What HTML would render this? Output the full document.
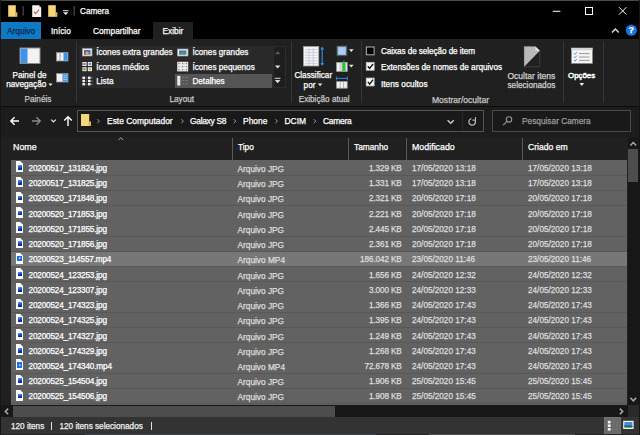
<!DOCTYPE html>
<html lang="pt-BR">
<head>
<meta charset="utf-8">
<title>Camera</title>
<style>
*{margin:0;padding:0;box-sizing:border-box}
html,body{width:640px;height:435px;overflow:hidden;background:#000}
body{position:relative;-webkit-text-stroke:.25px currentColor;font-family:"Liberation Sans",sans-serif;font-size:8.2px;color:#fff;line-height:1}
.a{position:absolute}
.tx{position:absolute;white-space:nowrap;line-height:10px;height:10px}
svg{position:absolute;overflow:visible}
/* title */
#title{left:0;top:0;width:640px;height:22px;background:#000}
#topb{left:0;top:0;width:640px;height:1px;background:#4a4a4a}
#tabs{left:0;top:22px;width:640px;height:17px;background:#000}
#tab-arq{left:1px;top:22px;width:40px;height:17px;background:#0f7ac3}
#tab-exi{left:152.5px;top:22px;width:40.5px;height:17px;background:#202020}
#ribbon{left:0;top:39px;width:640px;height:67.5px;background:#202020}
#ribline{left:0;top:106px;width:640px;height:1.2px;background:#0c0c0c}
.gsep{position:absolute;top:41px;height:62px;width:1px;background:#363636}
#gallery{left:78.5px;top:45.6px;width:194px;height:42.4px;background:#292929}
#gbtn{left:272.5px;top:45.6px;width:13.8px;height:42.4px;border:1px solid #2c2c2c;background:#1e1e1e}
#gsel{left:175px;top:74px;width:97px;height:14px;background:#555}
.glabel{color:#c8c8c8}
/* nav */
#nav{left:0;top:107px;width:640px;height:30px;background:#1c1c1c}
#addr{left:77px;top:110px;width:406.5px;height:22px;border:1px solid #555;background:#191919}
#addrsep{left:461.5px;top:111px;width:1px;height:20px;background:#282828}
#search{left:492px;top:110px;width:139px;height:22px;border:1px solid #4a4a4a;background:#191919}
/* header */
#hdr{left:0;top:137px;width:640px;height:23px;background:#202020}
.hsep{position:absolute;top:138px;height:22px;width:1px;background:#5a5a5a}
/* list */
#list{left:0;top:159.6px;width:640px;height:246px;background:#202020}
.row{position:absolute;left:11px;width:616px;height:14.43px;background:#626262}
.row.hl{background:#777}
#rowsbg{left:11px;top:159.6px;width:616px;height:245.6px;background:#585858}
.c{position:absolute;top:3.6px;white-space:nowrap;line-height:10px;height:10px;color:#dedede}
.c.n{left:17.5px;color:#fff;font-size:8.2px;letter-spacing:-.17px}
.c.t{left:226.5px;font-size:8.3px}
.c.s{right:225.3px;font-size:8.2px;letter-spacing:-.12px}
.c.d1{left:401px;font-size:8.2px}
.c.d2{left:517px;font-size:8.2px}
.fi{position:absolute;left:4.8px;top:1.1px;width:7.6px;height:10.7px;background:linear-gradient(225deg,transparent 1.5px,#d4d4d4 1.5px,#d4d4d4 2.3px,#fff 2.3px);display:block}
.fi b{position:absolute;left:1.8px;top:3.7px;width:4.7px;height:4.6px;background:linear-gradient(170deg,#5aa6ee 0%,#1f5fd0 40%,#0a2a9a 75%,#0a2590 100%);display:block}
.fi.mp4 b{background:#1b6fe2;left:1.2px;top:3px;width:5.4px;height:5.2px}
.fi.mp4 b::after{content:"";position:absolute;left:1.9px;top:1.3px;border-left:2.4px solid #dfeeff;border-top:1.3px solid transparent;border-bottom:1.3px solid transparent}
/* scrollbars */
#vs{left:627.5px;top:137px;width:11.5px;height:268.4px;background:#171717}
#vthumb{left:628px;top:149.3px;width:10.4px;height:32.5px;background:#4d4d4d}
#hs{left:1px;top:405.2px;width:627px;height:11.6px;background:#171717}
#hthumb{left:12.8px;top:405.7px;width:322.7px;height:11px;background:#4d4d4d}
#corner{left:627.5px;top:405.2px;width:11.5px;height:12px;background:#2a2a2a}
/* status */
#status{left:0;top:416.7px;width:640px;height:18.3px;background:#333}
#lb{left:0;top:0;width:1px;height:435px;background:#151515}
#rb{left:639px;top:0;width:1px;height:435px;background:#151515}
</style>
</head>
<body>
<div class="a" id="title"></div>
<div class="a" id="tabs"></div>
<div class="a" id="tab-arq"></div>
<div class="a" id="tab-exi"></div>
<div class="a" id="ribbon"></div>
<div class="a" id="ribline"></div>
<div class="a" id="topb"></div>

<!-- title bar icons -->
<svg style="left:0;top:0" width="640" height="40" viewBox="0 0 640 40">
  <!-- folder 1 -->
  <path d="M8.2 5.2h7.6v11.6h-7.6z" fill="#f6d67a"/><path d="M15.2 12.3h2.2v4.5h-2.2z" fill="#e0b64a"/>
  <rect x="22.4" y="6" width="1.6" height="9.6" fill="#3a3a3a"/>
  <!-- doc -->
  <path d="M32.2 5.2h6.6l2.4 2.4v9.4h-9z" fill="#f4f4f4"/><path d="M38.8 5.2v2.4h2.4z" fill="#bdbdbd"/>
  <path d="M34 11.6l1.6 2 3.6-4" stroke="#e2572f" stroke-width="1.1" fill="none"/>
  <!-- folder 2 -->
  <path d="M48.2 5.2h7.6v11.6h-7.6z" fill="#f6d67a"/><path d="M55.2 12.3h2.2v4.5h-2.2z" fill="#e0b64a"/>
  <!-- qat dropdown -->
  <rect x="63" y="10.2" width="5.4" height="1" fill="#e8e8e8"/><path d="M63 12.2h5.4l-2.7 2.8z" fill="#e8e8e8"/>
  <rect x="73.4" y="6" width="1.6" height="9.6" fill="#3a3a3a"/>
  <!-- window controls -->
  <rect x="552.8" y="10.8" width="7.6" height="1" fill="#fff"/>
  <rect x="585.5" y="7.5" width="7" height="7" fill="none" stroke="#fff" stroke-width="1"/>
  <path d="M619 7.2l7.4 7.4M626.4 7.2l-7.4 7.4" stroke="#fff" stroke-width="1" fill="none"/>
  <!-- collapse chevron + help -->
  <path d="M612 32.6l3.4-3.6 3.4 3.6" stroke="#d8d8d8" stroke-width="1.5" fill="none"/>
  <circle cx="631.3" cy="30.2" r="5.6" fill="#1a73d9"/>
</svg>
<span class="tx" style="left:628.6px;top:25.2px;font-size:9px;font-weight:bold;color:#fff">?</span>
<span class="tx" style="left:80px;top:6.6px;font-size:8.2px;color:#fff">Camera</span>
<span class="tx" style="left:7px;top:25.8px;font-size:8.3px;color:#0a2a4d">Arquivo</span>
<span class="tx" style="left:51px;top:25.8px;font-size:8.3px">Início</span>
<span class="tx" style="left:93px;top:25.8px;font-size:8.3px">Compartilhar</span>
<span class="tx" style="left:162.5px;top:25.8px;font-size:8.3px">Exibir</span>

<!-- ribbon: Painéis -->
<svg style="left:0;top:39px" width="640" height="68" viewBox="0 39 640 68">
  <!-- nav pane icon -->
  <rect x="20" y="48" width="20" height="15.5" fill="#f2f2f2" stroke="#8a8a8a" stroke-width="1"/>
  <rect x="20.5" y="48.5" width="7" height="14.5" fill="#3d93ea"/>
  <!-- preview pane small -->
  <rect x="56.5" y="52.5" width="11.5" height="8.5" fill="#f2f2f2" stroke="#8a8a8a" stroke-width=".8"/>
  <rect x="63.5" y="53" width="4.2" height="7.6" fill="#3d93ea"/>
  <rect x="59.6" y="53" width=".8" height="7.6" fill="#8a8a8a"/>
  <!-- details pane small -->
  <rect x="56.5" y="73.5" width="11.5" height="8.5" fill="#f2f2f2" stroke="#8a8a8a" stroke-width=".8"/>
  <rect x="62.5" y="74" width="5.2" height="7.6" fill="#3d93ea"/>
  <path d="M63.3 75.6h3.6M63.3 77.6h3.6M63.3 79.6h3.6" stroke="#cfe3fa" stroke-width=".7"/>
  <path d="M48.4 83.5h4.2l-2.1 2.5z" fill="#e8e8e8"/>
</svg>
<span class="tx" style="left:12.5px;top:71.45px">Painel de</span>
<span class="tx" style="left:6.2px;top:80.4px">navegação</span>
<span class="tx glabel" style="left:24.5px;top:95.4px">Painéis</span>
<div class="gsep" style="left:75.5px"></div>

<!-- ribbon: Layout -->
<div class="a" id="gallery"></div>
<div class="a" id="gbtn"></div>
<div class="a" id="gsel"></div>
<svg style="left:0;top:39px" width="640" height="68" viewBox="0 39 640 68">
  <!-- extra grandes -->
  <rect x="82.4" y="48.6" width="9.6" height="7.4" fill="#e9eef5" stroke="#9a9a9a" stroke-width=".7"/>
  <rect x="84" y="50" width="6.4" height="4.6" fill="#3b66c4"/><rect x="85.6" y="51.6" width="3" height="3" fill="#e6b13a"/><rect x="84" y="53" width="2" height="1.6" fill="#d24a3a"/>
  <!-- medios -->
  <rect x="82.4" y="62" width="4.2" height="4" fill="#e8e8e8"/><rect x="87.8" y="62" width="4.2" height="4" fill="#e8e8e8"/>
  <rect x="82.4" y="67.2" width="4.2" height="4" fill="#e8e8e8"/><rect x="87.8" y="67.2" width="4.2" height="4" fill="#e8e8e8"/>
  <rect x="83.3" y="63" width="2.2" height="2" fill="#d9583c"/><rect x="88.8" y="63" width="2.2" height="2" fill="#4a86d8"/>
  <rect x="83.3" y="68.2" width="2.2" height="2" fill="#5aa046"/><rect x="88.8" y="68.2" width="2.2" height="2" fill="#e6b13a"/>
  <!-- lista -->
  <rect x="82.4" y="76.6" width="2.6" height="2.4" fill="#f0f0f0"/><rect x="82.4" y="79.8" width="2.6" height="2.4" fill="#f0f0f0"/><rect x="82.4" y="83" width="2.6" height="2.4" fill="#f0f0f0"/>
  <rect x="88" y="76.6" width="2.6" height="2.4" fill="#f0f0f0"/><rect x="88" y="79.8" width="2.6" height="2.4" fill="#f0f0f0"/><rect x="88" y="83" width="2.6" height="2.4" fill="#f0f0f0"/>
  <rect x="85.6" y="77.4" width="1.6" height=".8" fill="#9a9a9a"/><rect x="85.6" y="80.6" width="1.6" height=".8" fill="#9a9a9a"/><rect x="85.6" y="83.8" width="1.6" height=".8" fill="#9a9a9a"/>
  <rect x="91.2" y="77.4" width="1.6" height=".8" fill="#9a9a9a"/><rect x="91.2" y="80.6" width="1.6" height=".8" fill="#9a9a9a"/><rect x="91.2" y="83.8" width="1.6" height=".8" fill="#9a9a9a"/>
  <!-- grandes -->
  <rect x="177.4" y="49" width="10.6" height="7" fill="#eef1f5" stroke="#9a9a9a" stroke-width=".7"/>
  <rect x="179" y="50.4" width="7.4" height="4.2" fill="#4c7fb4"/><path d="M179 54.6l2.6-2.2 2 1.4 1.4-1 1.4 1.8z" fill="#5e9a50"/>
  <!-- pequenos -->
  <rect x="177.2" y="61.8" width="11" height="9.6" fill="#ededed"/>
  <g><rect x="178.2" y="62.9" width="1.3" height="1.3" fill="#d9583c"/><rect x="182" y="62.9" width="1.3" height="1.3" fill="#4a86d8"/><rect x="185.8" y="62.9" width="1.3" height="1.3" fill="#d9583c"/>
  <rect x="178.2" y="66" width="1.3" height="1.3" fill="#e6b13a"/><rect x="182" y="66" width="1.3" height="1.3" fill="#5aa046"/><rect x="185.8" y="66" width="1.3" height="1.3" fill="#4a86d8"/>
  <rect x="178.2" y="69.1" width="1.3" height="1.3" fill="#4a86d8"/><rect x="182" y="69.1" width="1.3" height="1.3" fill="#d9583c"/><rect x="185.8" y="69.1" width="1.3" height="1.3" fill="#d9583c"/>
  <path d="M180.2 63.5h1M184 63.5h1M180.2 66.6h1M184 66.6h1M180.2 69.7h1M184 69.7h1" stroke="#aaa" stroke-width=".5"/></g>
  <!-- detalhes -->
  <rect x="177.3" y="75.9" width="3" height="9.6" fill="#f4f4f4"/>
  <path d="M177.3 79h3M177.3 82.2h3" stroke="#b8b8b8" stroke-width=".5"/>
  <path d="M181.8 77.5h2.4M185.2 77.5h2.8M181.8 80.7h2.4M185.2 80.7h2.8M181.8 83.9h2.4M185.2 83.9h2.8" stroke="#7c7c7c" stroke-width=".9"/>
  <!-- gallery scroll -->
  <path d="M274.8 54.2l2.8-3.2 2.8 3.2z" fill="#555"/>
  <path d="M274.8 65.6h5.6l-2.8 3z" fill="#dcdcdc"/>
  <rect x="274.8" y="77.8" width="5.6" height="1" fill="#dcdcdc"/><path d="M274.8 80.1h5.6l-2.8 3.2z" fill="#dcdcdc"/>
</svg>
<span class="tx" style="left:96.2px;top:47.9px">Ícones extra grandes</span>
<span class="tx" style="left:96.2px;top:63px">Ícones médios</span>
<span class="tx" style="left:96.2px;top:76.9px">Lista</span>
<span class="tx" style="left:192.4px;top:47.9px">Ícones grandes</span>
<span class="tx" style="left:192.4px;top:63px">Ícones pequenos</span>
<span class="tx" style="left:192.4px;top:76.9px">Detalhes</span>
<span class="tx glabel" style="left:169.5px;top:95.4px">Layout</span>
<div class="gsep" style="left:290.5px"></div>

<!-- ribbon: Exibição atual -->
<svg style="left:0;top:39px" width="640" height="68" viewBox="0 39 640 68">
  <rect x="303.4" y="46.4" width="15.4" height="19.6" fill="#f4f4f4" stroke="#9a9a9a" stroke-width=".8"/>
  <path d="M305 49.6h12.2M305 52.4h12.2M305 55.2h12.2M305 58h12.2M305 60.8h12.2M305 63.4h12.2" stroke="#b9c4d4" stroke-width=".7"/>
  <path d="M309 48v17M313.2 48v17" stroke="#b9c4d4" stroke-width=".7"/>
  <path d="M322.2 47.4v17.6" stroke="#2f8ae6" stroke-width="1.2"/><path d="M320.2 49.4l2-2.8 2 2.8zM320.2 63l2 2.8 2-2.8z" fill="#2f8ae6"/>
  <path d="M317.9 83.6h4.4l-2.2 2.6z" fill="#e8e8e8"/>
  <!-- group by -->
  <rect x="336.9" y="46" width="10" height="9.8" fill="#8a98a8" stroke="#3c434c" stroke-width=".8"/>
  <rect x="338.2" y="47.2" width="7.4" height="7.4" fill="#a6d0fa"/>
  <path d="M349 49.2h4.6l-2.3 2.8z" fill="#e8e8e8"/>
  <!-- add columns -->
  <rect x="336.6" y="62.4" width="10.6" height="9" fill="#f2f2f2" stroke="#9a9a9a" stroke-width=".8"/>
  <path d="M340.2 62.4v9M342 62.4v9" stroke="#9a9a9a" stroke-width=".6"/><rect x="342.2" y="62.6" width="3.4" height="8.6" fill="#2fc23a"/><rect x="343.4" y="60.6" width="1" height="1.6" fill="#2f8ae6"/>
  <path d="M349 64.8h4.6l-2.3 2.8z" fill="#e8e8e8"/>
  <!-- size columns -->
  <rect x="336.6" y="81.6" width="10.6" height="6.6" fill="#f2f2f2" stroke="#9a9a9a" stroke-width=".8"/>
  <path d="M340.2 81.6v6.6M343.6 81.6v6.6" stroke="#9a9a9a" stroke-width=".7"/>
  <path d="M336.4 78.4h11" stroke="#2f8ae6" stroke-width="1"/><path d="M336.4 76.6v3.6M347.4 76.6v3.6" stroke="#2f8ae6" stroke-width=".9"/>
</svg>
<span class="tx" style="left:294.4px;top:71.4px">Classificar</span>
<span class="tx" style="left:303.6px;top:80.6px">por</span>
<span class="tx glabel" style="left:298.7px;top:95.4px">Exibição atual</span>
<div class="gsep" style="left:360.5px"></div>

<!-- ribbon: Mostrar/ocultar -->
<svg style="left:0;top:39px" width="640" height="68" viewBox="0 39 640 68">
  <rect x="366.3" y="47" width="7.8" height="7.8" fill="#000" stroke="#c4c4c4" stroke-width=".9"/>
  <rect x="366.3" y="62.4" width="7.8" height="7.8" fill="#fff" stroke="#c4c4c4" stroke-width=".9"/>
  <path d="M367.8 66.2l1.9 2.2 3.3-4.4" stroke="#111" stroke-width="1.4" fill="none"/>
  <rect x="366.3" y="78.1" width="7.8" height="7.8" fill="#fff" stroke="#c4c4c4" stroke-width=".9"/>
  <path d="M367.8 81.9l1.9 2.2 3.3-4.4" stroke="#111" stroke-width="1.4" fill="none"/>
  <!-- hide selected -->
  <path d="M524.2 46.4h11.2l4.4 4.4v16h-15.6z" fill="none" stroke="#6a6a6a" stroke-width=".8" stroke-dasharray="1 1"/>
  <path d="M524.2 46.4h11.2l4.4 4.4-15.6 16z" fill="#b9b9b9"/>
  <path d="M535.4 46.4v4.4h4.4z" fill="#e0e0e0"/>
  <!-- options -->
  <rect x="571.4" y="48" width="21" height="15.4" fill="#f4f4f4" stroke="#8a8a8a" stroke-width=".8"/>
  <rect x="571.4" y="48" width="21" height="2.2" fill="#d6d6d6"/>
  <path d="M574 53.2l1 1.2 1.8-2.2M574 56.6l1 1.2 1.8-2.2M574 60l1 1.2 1.8-2.2" stroke="#2f7fd8" stroke-width=".8" fill="none"/>
  <path d="M579 53.6h10.6M579 57h10.6M579 60.4h10.6" stroke="#8f8f8f" stroke-width=".9"/>
  <path d="M579.4 83h4.8l-2.4 2.9z" fill="#e8e8e8"/>
</svg>
<span class="tx" style="left:381px;top:46.9px;letter-spacing:-.085px">Caixas de seleção de item</span>
<span class="tx" style="left:381px;top:62.7px">Extensões de nomes de arquivos</span>
<span class="tx" style="left:381px;top:78.5px;font-size:8.3px">Itens ocultos</span>
<span class="tx" style="left:507.5px;top:71.35px;color:#d2d2d2;font-size:8.5px">Ocultar itens</span>
<span class="tx" style="left:507.5px;top:80.55px;color:#d2d2d2">selecionados</span>
<span class="tx" style="left:568px;top:71.4px;font-size:7.9px;-webkit-text-stroke:.45px #fff">Opções</span>
<span class="tx glabel" style="left:432px;top:95.4px;font-size:8.55px">Mostrar/ocultar</span>
<div class="gsep" style="left:562.5px"></div>
<div class="gsep" style="left:602.5px"></div>

<!-- nav bar -->
<div class="a" id="nav"></div>
<div class="a" id="addr"></div>
<div class="a" id="addrsep"></div>
<div class="a" id="search"></div>
<svg style="left:0;top:107px" width="640" height="30" viewBox="0 107 640 30">
  <path d="M19 121h-8M14.6 117.2l-3.8 3.8 3.8 3.8" stroke="#fff" stroke-width="1.4" fill="none"/>
  <path d="M32 121h8M36.4 117.2l3.8 3.8-3.8 3.8" stroke="#8a8a8a" stroke-width="1.4" fill="none"/>
  <path d="M51.2 119.6l2.3 2.3 2.3-2.3" stroke="#e0e0e0" stroke-width="1.3" fill="none"/>
  <path d="M68 126v-9M64.2 120.6l3.8-3.8 3.8 3.8" stroke="#fff" stroke-width="1.4" fill="none"/>
  <!-- folder -->
  <path d="M81 114h8.2v12h-8.2z" fill="#f6d67a"/><path d="M88.6 121.4h2.4v4.6h-2.4z" fill="#e0b64a"/>
  <!-- crumbs -->
  <g stroke="#9a9a9a" stroke-width="1" fill="none">
   <path d="M97.4 119.2l2 2-2 2"/><path d="M181.4 119.2l2 2-2 2"/><path d="M233.8 119.2l2 2-2 2"/><path d="M275.4 119.2l2 2-2 2"/><path d="M313.8 119.2l2 2-2 2"/>
  </g>
  <path d="M447.6 120.2l3.1 3.1 3.1-3.1" stroke="#c8c8c8" stroke-width="1.5" fill="none"/>
  <path d="M475.06 120.15A3.3 3.3 0 1 1 471.35 118.61" stroke="#b4b4b4" stroke-width="1.3" fill="none"/><path d="M475.5 117v3.1h-3" stroke="#b4b4b4" stroke-width="1.1" fill="none"/>
  <circle cx="509" cy="119.4" r="2.7" stroke="#949494" stroke-width="1.1" fill="none"/><path d="M507 121.4l-3.8 3.8" stroke="#949494" stroke-width="1.2"/>
</svg>
<span class="tx" style="left:107px;top:116px;font-size:8.45px">Este Computador</span>
<span class="tx" style="left:190px;top:116px;font-size:8.45px;letter-spacing:-.3px">Galaxy S8</span>
<span class="tx" style="left:243px;top:116px;font-size:8.45px">Phone</span>
<span class="tx" style="left:284.5px;top:116px;font-size:8.45px">DCIM</span>
<span class="tx" style="left:323px;top:116px;font-size:8.45px;letter-spacing:-.25px">Camera</span>
<span class="tx" style="left:522px;top:116px;font-size:8.3px;color:#9c9c9c">Pesquisar Camera</span>

<!-- header -->
<div class="a" id="hdr"></div>
<div class="hsep" style="left:232px"></div>
<div class="hsep" style="left:348px"></div>
<div class="hsep" style="left:406px"></div>
<div class="hsep" style="left:522px"></div>
<svg style="left:0;top:137px" width="640" height="23" viewBox="0 137 640 23">
  <path d="M118.4 140l2.4-2.2 2.4 2.2" stroke="#b8b8b8" stroke-width=".9" fill="none"/>
</svg>
<span class="tx" style="left:13px;top:142px;font-size:8.9px">Nome</span>
<span class="tx" style="left:238px;top:142px;font-size:8.3px">Tipo</span>
<span class="tx" style="left:354px;top:142px;font-size:8.3px">Tamanho</span>
<span class="tx" style="left:412px;top:142px;font-size:8.85px">Modificado</span>
<span class="tx" style="left:528px;top:142px;font-size:8.6px">Criado em</span>

<!-- list -->
<div class="a" id="list"></div>
<div class="a" id="rowsbg"></div>
<div class="row" style="top:160.40px"><i class="fi jpg"><b></b></i><span class="c n">20200517_131824.jpg</span><span class="c t">Arquivo JPG</span><span class="c s">1.329 KB</span><span class="c d1">17/05/2020 13:18</span><span class="c d2">17/05/2020 13:18</span></div>
<div class="row" style="top:175.63px"><i class="fi jpg"><b></b></i><span class="c n">20200517_131825.jpg</span><span class="c t">Arquivo JPG</span><span class="c s">1.331 KB</span><span class="c d1">17/05/2020 13:18</span><span class="c d2">17/05/2020 13:18</span></div>
<div class="row" style="top:190.86px"><i class="fi jpg"><b></b></i><span class="c n">20200520_171848.jpg</span><span class="c t">Arquivo JPG</span><span class="c s">2.321 KB</span><span class="c d1">20/05/2020 17:18</span><span class="c d2">20/05/2020 17:18</span></div>
<div class="row" style="top:206.09px"><i class="fi jpg"><b></b></i><span class="c n">20200520_171853.jpg</span><span class="c t">Arquivo JPG</span><span class="c s">2.221 KB</span><span class="c d1">20/05/2020 17:18</span><span class="c d2">20/05/2020 17:18</span></div>
<div class="row" style="top:221.32px"><i class="fi jpg"><b></b></i><span class="c n">20200520_171855.jpg</span><span class="c t">Arquivo JPG</span><span class="c s">2.445 KB</span><span class="c d1">20/05/2020 17:18</span><span class="c d2">20/05/2020 17:18</span></div>
<div class="row" style="top:236.55px"><i class="fi jpg"><b></b></i><span class="c n">20200520_171856.jpg</span><span class="c t">Arquivo JPG</span><span class="c s">2.361 KB</span><span class="c d1">20/05/2020 17:18</span><span class="c d2">20/05/2020 17:18</span></div>
<div class="row hl" style="top:251.78px"><i class="fi mp4"><b></b></i><span class="c n">20200523_114557.mp4</span><span class="c t">Arquivo MP4</span><span class="c s">186.042 KB</span><span class="c d1">23/05/2020 11:46</span><span class="c d2">23/05/2020 11:46</span></div>
<div class="row" style="top:267.01px"><i class="fi jpg"><b></b></i><span class="c n">20200524_123253.jpg</span><span class="c t">Arquivo JPG</span><span class="c s">1.656 KB</span><span class="c d1">24/05/2020 12:32</span><span class="c d2">24/05/2020 12:32</span></div>
<div class="row" style="top:282.24px"><i class="fi jpg"><b></b></i><span class="c n">20200524_123307.jpg</span><span class="c t">Arquivo JPG</span><span class="c s">3.000 KB</span><span class="c d1">24/05/2020 12:33</span><span class="c d2">24/05/2020 12:33</span></div>
<div class="row" style="top:297.47px"><i class="fi jpg"><b></b></i><span class="c n">20200524_174323.jpg</span><span class="c t">Arquivo JPG</span><span class="c s">1.366 KB</span><span class="c d1">24/05/2020 17:43</span><span class="c d2">24/05/2020 17:43</span></div>
<div class="row" style="top:312.70px"><i class="fi jpg"><b></b></i><span class="c n">20200524_174325.jpg</span><span class="c t">Arquivo JPG</span><span class="c s">1.395 KB</span><span class="c d1">24/05/2020 17:43</span><span class="c d2">24/05/2020 17:43</span></div>
<div class="row" style="top:327.93px"><i class="fi jpg"><b></b></i><span class="c n">20200524_174327.jpg</span><span class="c t">Arquivo JPG</span><span class="c s">1.249 KB</span><span class="c d1">24/05/2020 17:43</span><span class="c d2">24/05/2020 17:43</span></div>
<div class="row" style="top:343.16px"><i class="fi jpg"><b></b></i><span class="c n">20200524_174329.jpg</span><span class="c t">Arquivo JPG</span><span class="c s">1.268 KB</span><span class="c d1">24/05/2020 17:43</span><span class="c d2">24/05/2020 17:43</span></div>
<div class="row" style="top:358.39px"><i class="fi mp4"><b></b></i><span class="c n">20200524_174340.mp4</span><span class="c t">Arquivo MP4</span><span class="c s">72.678 KB</span><span class="c d1">24/05/2020 17:43</span><span class="c d2">24/05/2020 17:43</span></div>
<div class="row" style="top:373.62px"><i class="fi jpg"><b></b></i><span class="c n">20200525_154504.jpg</span><span class="c t">Arquivo JPG</span><span class="c s">1.906 KB</span><span class="c d1">25/05/2020 15:45</span><span class="c d2">25/05/2020 15:45</span></div>
<div class="row" style="top:388.85px"><i class="fi jpg"><b></b></i><span class="c n">20200525_154506.jpg</span><span class="c t">Arquivo JPG</span><span class="c s">1.908 KB</span><span class="c d1">25/05/2020 15:45</span><span class="c d2">25/05/2020 15:45</span></div>
<div class="row part" style="top:404.08px;height:1.12px"><i class="fi jpg"><b></b></i></div>

<!-- scrollbars -->
<div class="a" id="vs"></div>
<div class="a" id="vthumb"></div>
<div class="a" id="hs"></div>
<div class="a" id="hthumb"></div>
<div class="a" id="corner"></div>
<svg style="left:0;top:0" width="640" height="435" viewBox="0 0 640 435">
  <path d="M630.4 145.6l2.9-3 2.9 3" stroke="#a8a8a8" stroke-width="1.5" fill="none"/>
  <path d="M630.4 397.8l2.9 3 2.9-3" stroke="#a8a8a8" stroke-width="1.5" fill="none"/>
  <path d="M8.2 408.6l-2.9 2.8 2.9 2.8" stroke="#a8a8a8" stroke-width="1.5" fill="none"/>
  <path d="M619.8 408.6l2.9 2.8-2.9 2.8" stroke="#a8a8a8" stroke-width="1.5" fill="none"/>
</svg>

<!-- status bar -->
<div class="a" id="status"></div>
<span class="tx" style="left:11px;top:422.1px;font-size:8.2px;color:#f0f0f0">120 itens</span>
<span class="tx" style="left:59.5px;top:422.1px;font-size:8.2px;color:#f0f0f0">120 itens selecionados</span>
<div class="a" style="left:51.1px;top:422px;width:1.4px;height:7.6px;background:#e4e4e4"></div>
<div class="a" style="left:151.1px;top:422px;width:1.4px;height:7.6px;background:#e4e4e4"></div>
<svg style="left:0;top:417px" width="640" height="18" viewBox="0 417 640 18">
  <rect x="604.6" y="417.4" width="15.8" height="17.6" fill="#696969" stroke="#7c7c7c" stroke-width=".8"/>
  <g fill="#f6f6f6"><rect x="607.8" y="420.8" width="2.8" height="2.6"/><rect x="607.8" y="424.4" width="2.8" height="2.6"/><rect x="607.8" y="428" width="2.8" height="2.6"/></g>
  <path d="M612.4 422.1h2.4M616 422.1h2.4M612.4 425.7h2.4M616 425.7h2.4M612.4 429.3h2.4M616 429.3h2.4" stroke="#7e7e7e" stroke-width=".9"/>
  <rect x="623.2" y="420.8" width="10.4" height="8.2" fill="#f4f6f8"/>
  <rect x="624.4" y="422" width="8" height="5.4" fill="#3d8ee8"/>
  <path d="M624.4 427.4v-2.6l3 1 2.4-.8 2.6 1v1.4z" fill="#2a6a3c"/>
</svg>

<div class="a" style="left:0;top:434.2px;width:640px;height:.8px;background:#262626"></div>
<div class="a" style="left:85px;top:434.2px;width:291px;height:.8px;background:#3e434b"></div>
<div class="a" style="left:429px;top:434.2px;width:146px;height:.8px;background:#4e4e4e"></div>
<div class="a" id="lb"></div>
<div class="a" id="rb"></div>
</body>
</html>
